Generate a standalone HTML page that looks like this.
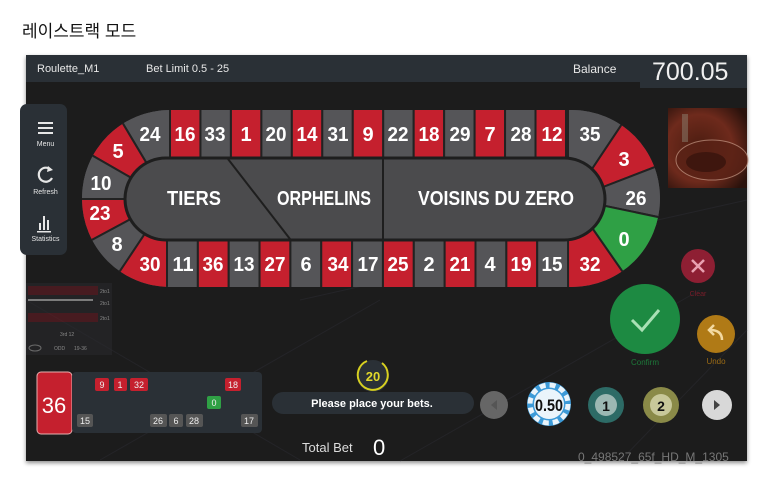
<!DOCTYPE html>
<html><head><meta charset="utf-8"><style>
html,body{margin:0;padding:0;background:#fff;width:779px;height:483px;overflow:hidden}
.t{position:absolute;left:22px;top:17px;font:17px "Liberation Sans","Noto Sans CJK KR",sans-serif;color:#111}
svg{position:absolute;left:0;top:0}
</style></head><body>
<div class="t">레이스트랙 모드</div>
<svg width="779" height="483" viewBox="0 0 779 483" font-family="Liberation Sans, sans-serif">
<defs>
<clipPath id="oc"><rect x="82" y="110" width="578" height="177" rx="88"/></clipPath>
<radialGradient id="wh" cx="0.4" cy="0.5" r="0.7"><stop offset="0" stop-color="#4a1c10"/><stop offset="0.6" stop-color="#6e2a1c"/><stop offset="1" stop-color="#2a120c"/></radialGradient>
<filter id="sh" x="-5%" y="-5%" width="110%" height="110%"><feDropShadow dx="0" dy="2" stdDeviation="2" flood-color="#000" flood-opacity="0.45"/></filter>
</defs>
<rect x="26" y="55" width="721" height="406" fill="#1b1b1e" filter="url(#sh)"/>
<g stroke="#2a2a30" stroke-width="1" opacity="0.6">
<line x1="26" y1="300" x2="300" y2="460"/><line x1="300" y1="300" x2="747" y2="200"/><line x1="400" y1="461" x2="700" y2="290"/><line x1="620" y1="461" x2="747" y2="330"/><line x1="100" y1="460" x2="380" y2="300"/>
</g>
<rect x="26" y="55" width="721" height="27" fill="#2a3036"/>
<rect x="640" y="55" width="107" height="33" fill="#2a3036"/>
<text x="37" y="72" font-size="11" fill="#e8e8e8">Roulette_M1</text>
<text x="146" y="72" font-size="11" fill="#e8e8e8">Bet Limit 0.5 - 25</text>
<text x="573" y="73" font-size="12" fill="#e8e8e8">Balance</text>
<text x="652" y="80" font-size="25" fill="#f0f0f0">700.05</text>
<rect x="20" y="104" width="47" height="151" rx="7" fill="#2a3036"/>
<g fill="#e6e6e6">
<rect x="38" y="122" width="15" height="2"/><rect x="38" y="127" width="15" height="2"/><rect x="38" y="132" width="15" height="2"/>
<text x="45.5" y="146" font-size="7" text-anchor="middle">Menu</text>
<text x="45.5" y="194" font-size="7" text-anchor="middle">Refresh</text>
<text x="45.5" y="241" font-size="7" text-anchor="middle">Statistics</text>
<rect x="39" y="223" width="2" height="7"/><rect x="43" y="216" width="2" height="14"/><rect x="47" y="220" width="2" height="10"/><rect x="37" y="231" width="14" height="1.5"/>
</g>
<path d="M51 170 A7 7 0 1 0 52 178" stroke="#e6e6e6" stroke-width="2.2" fill="none"/>
<path d="M48 166 L53 170 L47 172 Z" fill="#e6e6e6"/>
<g clip-path="url(#oc)">
<rect x="82" y="110" width="578" height="177" fill="#555558"/>
<g stroke="#222" stroke-width="2">
<polygon points="168,199 30,-32 170,-32 170,199" fill="#555558"/>
<polygon points="168,199 30,-32 -72,61" fill="#c5202e"/>
<polygon points="168,199 -72,61 -100,199" fill="#555558"/>
<polygon points="168,199 -100,199 -72,328" fill="#c5202e"/>
<polygon points="168,199 -72,328 30,406" fill="#555558"/>
<polygon points="168,199 30,406 167,406 167,199" fill="#c5202e"/>
<polygon points="572,199 716,-17 568,-17 568,199" fill="#555558"/>
<polygon points="572,199 716,-17 821,103" fill="#c5202e"/>
<polygon points="572,199 821,103 830,253" fill="#555558"/>
<polygon points="572,199 830,253 716,406" fill="#2fa045"/>
<polygon points="572,199 716,406 568,406 568,199" fill="#c5202e"/>
</g>
<g stroke="#222" stroke-width="2">
<rect x="170" y="100" width="30.46" height="58" fill="#c5202e"/>
<rect x="200.46" y="100" width="30.46" height="58" fill="#555558"/>
<rect x="230.92" y="100" width="30.46" height="58" fill="#c5202e"/>
<rect x="261.38" y="100" width="30.46" height="58" fill="#555558"/>
<rect x="291.84" y="100" width="30.46" height="58" fill="#c5202e"/>
<rect x="322.3" y="100" width="30.46" height="58" fill="#555558"/>
<rect x="352.76" y="100" width="30.46" height="58" fill="#c5202e"/>
<rect x="383.22" y="100" width="30.46" height="58" fill="#555558"/>
<rect x="413.68" y="100" width="30.46" height="58" fill="#c5202e"/>
<rect x="444.14" y="100" width="30.46" height="58" fill="#555558"/>
<rect x="474.6" y="100" width="30.46" height="58" fill="#c5202e"/>
<rect x="505.06" y="100" width="30.46" height="58" fill="#555558"/>
<rect x="535.52" y="100" width="30.46" height="58" fill="#c5202e"/>
<rect x="167" y="240" width="30.85" height="58" fill="#555558"/>
<rect x="197.85" y="240" width="30.85" height="58" fill="#c5202e"/>
<rect x="228.7" y="240" width="30.85" height="58" fill="#555558"/>
<rect x="259.55" y="240" width="30.85" height="58" fill="#c5202e"/>
<rect x="290.4" y="240" width="30.85" height="58" fill="#555558"/>
<rect x="321.25" y="240" width="30.85" height="58" fill="#c5202e"/>
<rect x="352.1" y="240" width="30.85" height="58" fill="#555558"/>
<rect x="382.95" y="240" width="30.85" height="58" fill="#c5202e"/>
<rect x="413.8" y="240" width="30.85" height="58" fill="#555558"/>
<rect x="444.65" y="240" width="30.85" height="58" fill="#c5202e"/>
<rect x="475.5" y="240" width="30.85" height="58" fill="#555558"/>
<rect x="506.35" y="240" width="30.85" height="58" fill="#c5202e"/>
<rect x="537.2" y="240" width="30.85" height="58" fill="#555558"/>
</g>
</g>
<rect x="125" y="158" width="480" height="82" rx="41" fill="#4b4b4d" stroke="#1e1e1e" stroke-width="3"/>
<line x1="228" y1="159" x2="290" y2="239" stroke="#1e1e1e" stroke-width="2"/>
<line x1="383" y1="159" x2="383" y2="239" stroke="#1e1e1e" stroke-width="2"/>
<g font-weight="bold" fill="#fff" text-anchor="middle">
<text x="194" y="205" font-size="20" textLength="54" lengthAdjust="spacingAndGlyphs">TIERS</text>
<text x="324" y="205" font-size="20" textLength="94" lengthAdjust="spacingAndGlyphs">ORPHELINS</text>
<text x="496" y="205" font-size="20" textLength="156" lengthAdjust="spacingAndGlyphs">VOISINS DU ZERO</text>
<g font-size="20">
<text x="150" y="141" textLength="21" lengthAdjust="spacingAndGlyphs">24</text><text x="185" y="141" textLength="21" lengthAdjust="spacingAndGlyphs">16</text><text x="215" y="141" textLength="21" lengthAdjust="spacingAndGlyphs">33</text><text x="246" y="141">1</text><text x="276" y="141" textLength="21" lengthAdjust="spacingAndGlyphs">20</text><text x="307" y="141" textLength="21" lengthAdjust="spacingAndGlyphs">14</text><text x="338" y="141" textLength="21" lengthAdjust="spacingAndGlyphs">31</text><text x="368" y="141">9</text><text x="398" y="141" textLength="21" lengthAdjust="spacingAndGlyphs">22</text><text x="429" y="141" textLength="21" lengthAdjust="spacingAndGlyphs">18</text><text x="460" y="141" textLength="21" lengthAdjust="spacingAndGlyphs">29</text><text x="490" y="141">7</text><text x="521" y="141" textLength="21" lengthAdjust="spacingAndGlyphs">28</text><text x="552" y="141" textLength="21" lengthAdjust="spacingAndGlyphs">12</text><text x="590" y="141" textLength="21" lengthAdjust="spacingAndGlyphs">35</text>
<text x="118" y="158">5</text><text x="101" y="190" textLength="21" lengthAdjust="spacingAndGlyphs">10</text><text x="100" y="220" textLength="21" lengthAdjust="spacingAndGlyphs">23</text><text x="117" y="251">8</text>
<text x="150" y="271" textLength="21" lengthAdjust="spacingAndGlyphs">30</text><text x="183" y="271" textLength="21" lengthAdjust="spacingAndGlyphs">11</text><text x="213" y="271" textLength="21" lengthAdjust="spacingAndGlyphs">36</text><text x="244" y="271" textLength="21" lengthAdjust="spacingAndGlyphs">13</text><text x="275" y="271" textLength="21" lengthAdjust="spacingAndGlyphs">27</text><text x="306" y="271">6</text><text x="338" y="271" textLength="21" lengthAdjust="spacingAndGlyphs">34</text><text x="368" y="271" textLength="21" lengthAdjust="spacingAndGlyphs">17</text><text x="398" y="271" textLength="21" lengthAdjust="spacingAndGlyphs">25</text><text x="429" y="271">2</text><text x="460" y="271" textLength="21" lengthAdjust="spacingAndGlyphs">21</text><text x="490" y="271">4</text><text x="521" y="271" textLength="21" lengthAdjust="spacingAndGlyphs">19</text><text x="552" y="271" textLength="21" lengthAdjust="spacingAndGlyphs">15</text><text x="590" y="271" textLength="21" lengthAdjust="spacingAndGlyphs">32</text>
<text x="624" y="166">3</text><text x="636" y="205" textLength="21" lengthAdjust="spacingAndGlyphs">26</text><text x="624" y="246">0</text>
</g>
</g>
<rect x="668" y="108" width="79" height="80" fill="url(#wh)"/>
<ellipse cx="712" cy="160" rx="36" ry="20" fill="#5a2216" stroke="#b88a78" stroke-width="1" opacity="0.8"/>
<ellipse cx="706" cy="162" rx="20" ry="10" fill="#3e160e"/>
<rect x="682" y="114" width="6" height="28" fill="#8a8070" opacity="0.5"/>
<g opacity="0.55" font-size="5" fill="#ddd">
<rect x="26" y="283" width="86" height="72" fill="#2a2a2e"/>
<rect x="28" y="286" width="70" height="9" fill="#6b1b24"/>
<rect x="28" y="313" width="70" height="9" fill="#6b1b24"/>
<rect x="28" y="299" width="65" height="2" fill="#ccc"/>
<text x="100" y="293">2to1</text><text x="100" y="305">2to1</text><text x="100" y="320">2to1</text>
<text x="60" y="336">3rd 12</text><text x="54" y="350">ODD</text><text x="74" y="350">19-36</text>
<ellipse cx="35" cy="348" rx="6" ry="3" fill="none" stroke="#aaa"/>
</g>
<rect x="37" y="372" width="35" height="62" rx="4" fill="#c5202e" stroke="#e6b0b0" stroke-width="1"/>
<text x="54" y="413" font-size="22" fill="#fff" text-anchor="middle">36</text>
<rect x="72" y="372" width="190" height="61" rx="4" fill="#2a3036"/>
<g font-size="9" fill="#eee" text-anchor="middle">
<rect x="95" y="378" width="14" height="13" rx="2" fill="#c5202e"/><text x="102" y="388">9</text>
<rect x="114" y="378" width="13" height="13" rx="2" fill="#c5202e"/><text x="120" y="388">1</text>
<rect x="130" y="378" width="18" height="13" rx="2" fill="#c5202e"/><text x="139" y="388">32</text>
<rect x="225" y="378" width="16" height="13" rx="2" fill="#c5202e"/><text x="233" y="388">18</text>
<rect x="207" y="396" width="14" height="13" rx="2" fill="#2fa045"/><text x="214" y="406">0</text>
<rect x="77" y="414" width="16" height="13" rx="2" fill="#555"/><text x="85" y="424">15</text>
<rect x="150" y="414" width="17" height="13" rx="2" fill="#555"/><text x="158" y="424">26</text>
<rect x="169" y="414" width="14" height="13" rx="2" fill="#555"/><text x="176" y="424">6</text>
<rect x="186" y="414" width="17" height="13" rx="2" fill="#555"/><text x="194" y="424">28</text>
<rect x="241" y="414" width="17" height="13" rx="2" fill="#555"/><text x="249" y="424">17</text>
</g>
<circle cx="373" cy="376" r="16" fill="#2a3036"/>
<path d="M367 361 A15 15 0 1 0 382 363" stroke="#d7d020" stroke-width="2" fill="none"/>
<text x="373" y="381" font-size="13" font-weight="bold" fill="#e2d82a" text-anchor="middle">20</text>
<rect x="272" y="392" width="202" height="22" rx="11" fill="#2a3036"/>
<text x="372" y="407" font-size="11" font-weight="bold" fill="#fff" text-anchor="middle">Please place your bets.</text>
<text x="302" y="452" font-size="13" fill="#ddd">Total Bet</text>
<text x="373" y="455" font-size="22" fill="#fff">0</text>
<circle cx="698" cy="266" r="17" fill="#8e1f33"/>
<path d="M692 260 L704 272 M704 260 L692 272" stroke="#e8a0b0" stroke-width="2.5"/>
<text x="698" y="296" font-size="7" fill="#7a1d2a" text-anchor="middle">Clear</text>
<circle cx="645" cy="319" r="35" fill="#1d8a42"/>
<path d="M632 320 L642 330 L659 310" stroke="#a9e0b5" stroke-width="3" fill="none"/>
<text x="645" y="365" font-size="8" fill="#1d7a3a" text-anchor="middle">Confirm</text>
<circle cx="716" cy="334" r="19" fill="#b07a16"/>
<path d="M722 340 Q722 330 710 330 M714 325 L709 330 L714 335" stroke="#f3d9a0" stroke-width="2.5" fill="none"/>
<text x="716" y="364" font-size="8" fill="#9a6a14" text-anchor="middle">Undo</text>
<circle cx="494" cy="405" r="14" fill="#666"/>
<path d="M497 400 L491 405 L497 410 Z" fill="#555"/>
<circle cx="549" cy="404" r="22" fill="#3c9ad8"/>
<circle cx="549" cy="404" r="19" fill="none" stroke="#eaf4fb" stroke-width="5" stroke-dasharray="6 4"/>
<circle cx="549" cy="404" r="15" fill="#eaf4fb"/>
<text x="549" y="411" font-size="17" font-weight="bold" fill="#111" text-anchor="middle" textLength="28" lengthAdjust="spacingAndGlyphs">0.50</text>
<circle cx="606" cy="405" r="18" fill="#2d6b66"/>
<circle cx="606" cy="405" r="11" fill="#9cb8b3"/>
<text x="606" y="411" font-size="14" font-weight="bold" fill="#111" text-anchor="middle">1</text>
<circle cx="661" cy="405" r="18" fill="#8a8a48"/>
<circle cx="661" cy="405" r="11" fill="#c8c89a"/>
<text x="661" y="411" font-size="14" font-weight="bold" fill="#111" text-anchor="middle">2</text>
<circle cx="717" cy="405" r="15" fill="#d8d8d8"/>
<path d="M714 400 L720 405 L714 410 Z" fill="#444"/>
<text x="578" y="461" font-size="12" fill="#777">0_498527_65f_HD_M_1305</text>
</svg>
</body></html>
